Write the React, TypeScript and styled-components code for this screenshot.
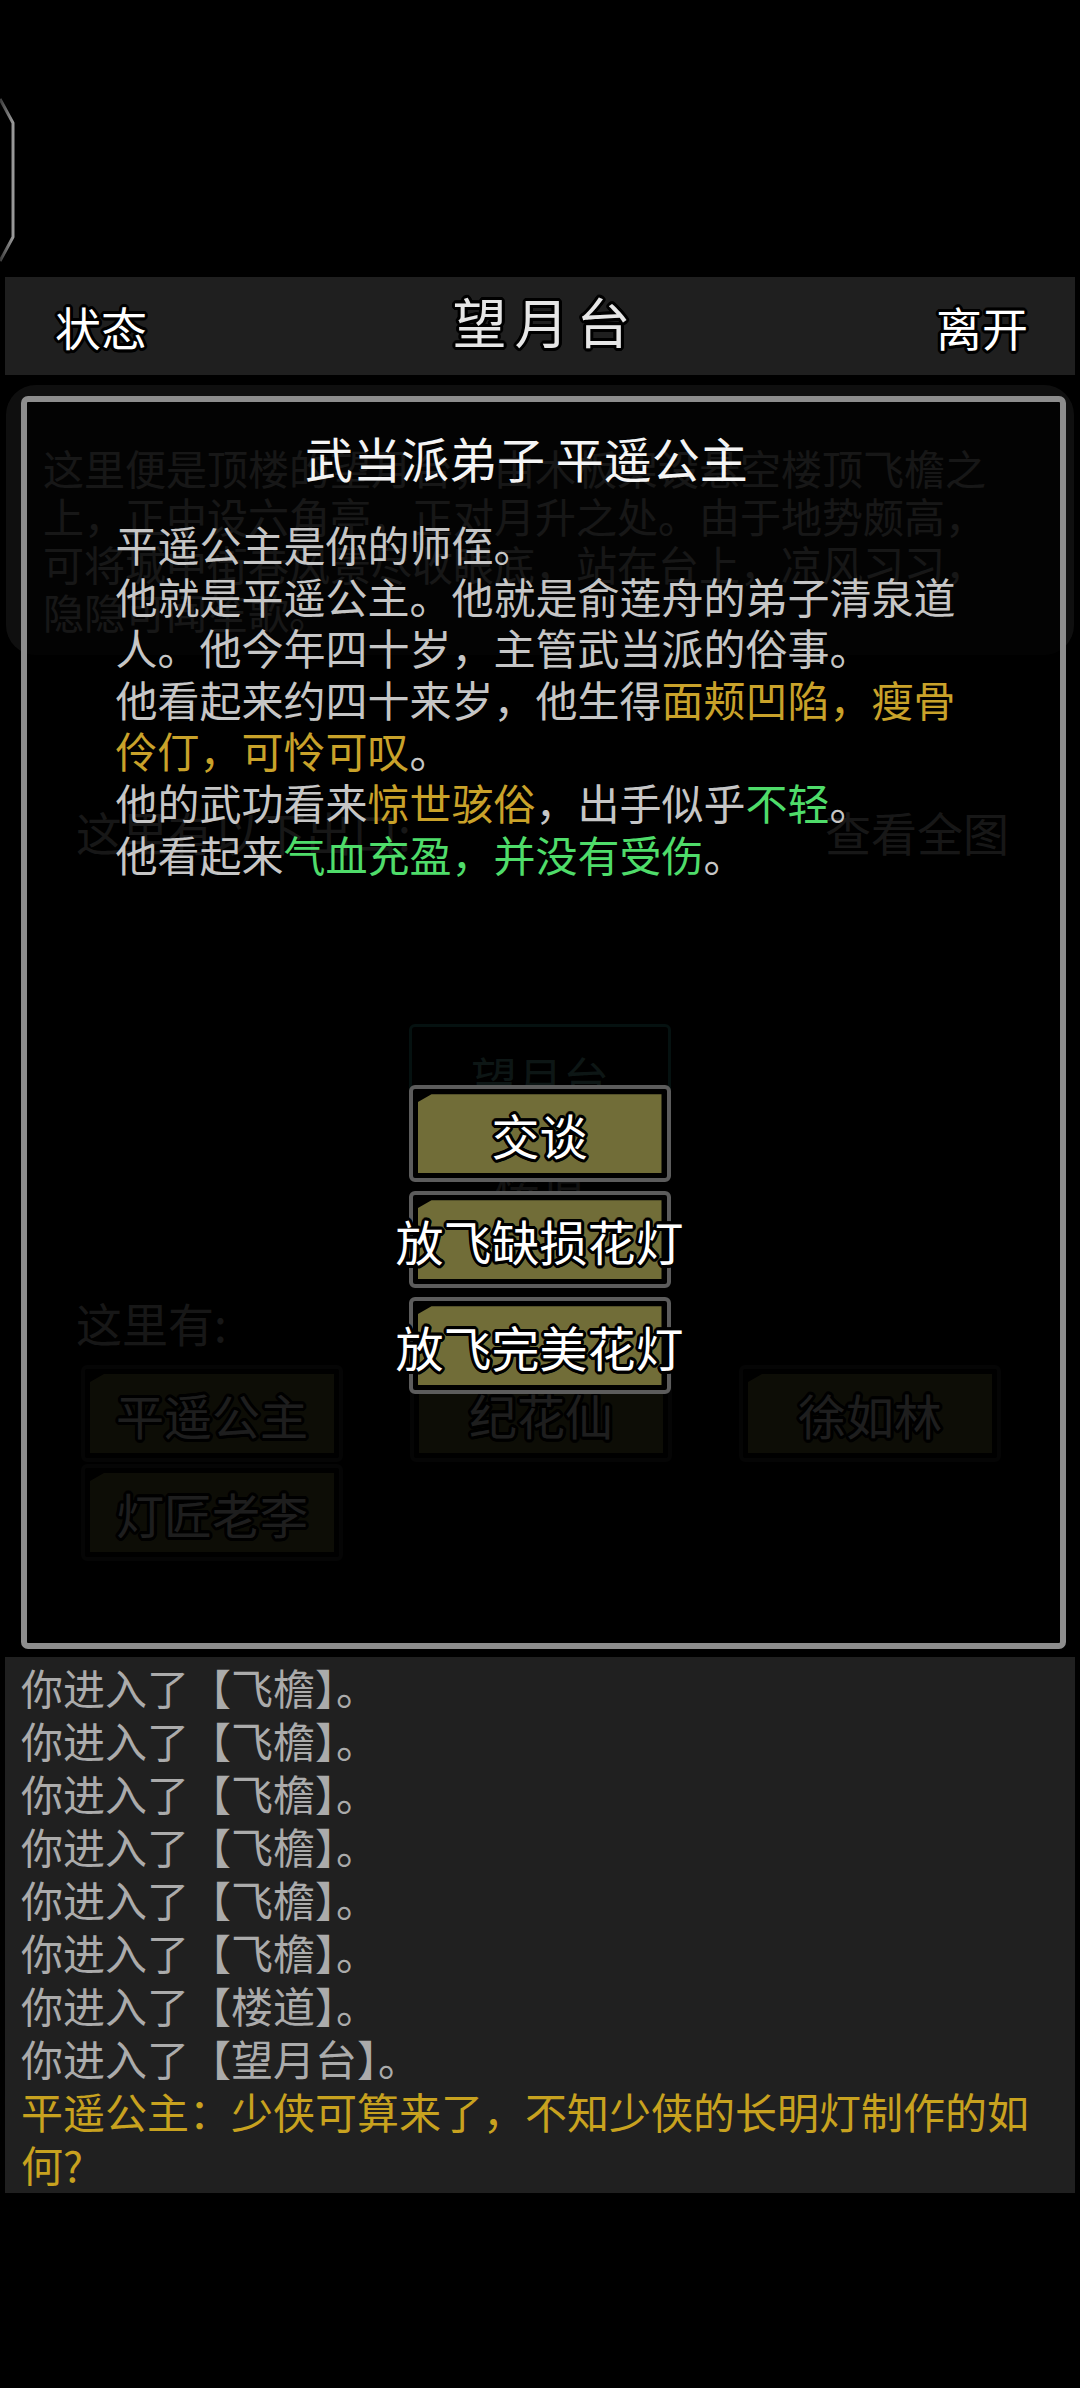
import React from 'react';
import styled, { createGlobalStyle } from 'styled-components';

const outline = (r: number, color = '#000') => {
  const parts: string[] = [];
  for (let i = 0; i < 16; i++) {
    const a = (i / 16) * Math.PI * 2;
    parts.push(`${(Math.cos(a) * r).toFixed(1)}px ${(Math.sin(a) * r).toFixed(1)}px 0 ${color}`);
  }
  return parts.join(', ');
};

const GlobalStyle = createGlobalStyle`
  html, body {
    margin: 0;
    padding: 0;
    background: #000;
  }
  body {
    font-family: "Noto Sans CJK SC", "Noto Sans", sans-serif;
  }
`;

const Page = styled.div`
  width: 1080px;
  height: 2388px;
  display: flex;
  flex-direction: column;
  background: #000;
  overflow: hidden;
`;

const StatusArea = styled.div`
  height: 277px;
  flex: none;
  position: relative;
`;

const SideHandle = styled.svg`
  position: absolute;
  left: 0;
  top: 97px;
`;

const Header = styled.header`
  flex: none;
  height: 98px;
  margin: 0 5px;
  padding: 0 47px 0 50px;
  box-sizing: border-box;
  background: #1f1f1f;
  display: flex;
  align-items: center;
  justify-content: space-between;
`;

const HeaderLink = styled.span`
  font-size: 46px;
  color: #fff;
  text-shadow: ${outline(3)};
`;

const HeaderTitle = styled.span`
  font-size: 54px;
  font-weight: 400;
  letter-spacing: 8px;
  margin-right: -8px;
  margin-top: -12px;
  color: #e6e6e6;
  text-shadow: ${outline(3)};
`;

const Main = styled.main`
  flex: none;
  height: 1282px;
  position: relative;
  overflow: hidden;
`;

/* ---------- scene underneath the dialog ---------- */

const Scene = styled.div`
  display: flex;
  flex-direction: column;
`;

const DescPanel = styled.div`
  margin: 10px 6px 0;
  padding: 58px 30px 20px 37px;
  background: #1f1f1f;
  border-radius: 30px;
`;

const DescText = styled.div`
  width: 962px;
  color: #c4c4c4;
  font-size: 41px;
  line-height: 48px;
`;

const ExitRow = styled.div`
  margin-top: 150px;
  padding: 0 71px 0 76px;
  display: flex;
  justify-content: space-between;
  font-size: 46px;
  line-height: 52px;
  color: #c4c4c4;
`;

const MapArea = styled.div`
  margin-top: 167px;
  display: flex;
  flex-direction: column;
  align-items: center;
`;

const MapRoom = styled.div<{ $current?: boolean }>`
  width: 262px;
  height: 104px;
  box-sizing: border-box;
  border: 3px solid ${p => (p.$current ? '#2c8f86' : 'transparent')};
  border-radius: 6px;
  display: flex;
  align-items: center;
  justify-content: center;
  font-size: 46px;
  color: ${p => (p.$current ? '#6fb8b0' : '#9a9a9a')};
`;

const HereLabel = styled.div`
  margin-top: 64px;
  padding-left: 76px;
  font-size: 46px;
  line-height: 52px;
  color: #c4c4c4;
`;

const NpcGrid = styled.div`
  margin-top: 17px;
  padding: 0 82px 0 81px;
  display: grid;
  grid-template-columns: repeat(3, 259px);
  justify-content: space-between;
  row-gap: 2px;
`;

/* ---------- shared olive button ---------- */

const Choice = styled.div<{ $frame: string }>`
  width: 262px;
  height: 97px;
  box-sizing: border-box;
  border: 4px solid ${p => p.$frame};
  border-radius: 6px;
  padding: 5px;
  background: #000;
  display: grid;
  grid-template-columns: minmax(0, 1fr);
  grid-template-rows: minmax(0, 1fr);
`;

const ChoiceFill = styled.div`
  grid-area: 1 / 1;
  background: #716d38;
  clip-path: polygon(14px 0, 100% 0, 100% 100%, 0 100%, 0 8px);
`;

const ChoiceLabel = styled.div`
  grid-area: 1 / 1;
  position: relative;
  display: flex;
  align-items: center;
  justify-content: center;
  white-space: nowrap;
  font-size: 48px;
  color: #fff;
  text-shadow: ${outline(3)};
`;

const ChoiceButton = ({ label, frame = '#5c5c5c' }: { label: string; frame?: string }) => (
  <Choice $frame={frame}>
    <ChoiceFill />
    <ChoiceLabel>{label}</ChoiceLabel>
  </Choice>
);

/* ---------- dialog ---------- */

const Dim = styled.div`
  position: absolute;
  inset: 0;
  background: rgba(0, 0, 0, 0.5);
`;

const Dialog = styled.section`
  position: absolute;
  top: 21px;
  left: 21px;
  right: 14px;
  bottom: 8px;
  box-sizing: border-box;
  border: 6px solid #8d8d8d;
  border-radius: 7px;
  background: rgba(0, 0, 0, 0.76);
  display: flex;
  flex-direction: column;
  align-items: center;
  padding-top: 24px;
`;

const DialogTitle = styled.h2`
  margin: 0 34px 0 0;
  font-size: 48px;
  line-height: 62px;
  font-weight: 400;
  color: #f4f4f4;
`;

const DialogBody = styled.div`
  width: 856px;
  margin-top: 30px;
  font-size: 42px;
  line-height: 51.6px;
  color: #c6c6c6;
`;

const Para = styled.div``;

const Tone = styled.span<{ $tone: 'gold' | 'green' }>`
  color: ${p => (p.$tone === 'gold' ? '#c9a22a' : '#4fdc6a')};
`;

const Actions = styled.div`
  margin: 206px 8px 0 0;
  display: flex;
  flex-direction: column;
  gap: 9px;
`;

/* ---------- message log ---------- */

const Log = styled.div`
  flex: none;
  height: 536px;
  margin: 0 5px;
  padding: 3px 16px 0 16px;
  box-sizing: border-box;
  background: #202020;
  font-size: 42px;
  line-height: 53px;
  color: #ababab;
`;

const LogLine = styled.div<{ $speech?: boolean }>`
  color: ${p => (p.$speech ? '#c8a21f' : '#ababab')};
`;

const log = [
  '你进入了【飞檐】。',
  '你进入了【飞檐】。',
  '你进入了【飞檐】。',
  '你进入了【飞檐】。',
  '你进入了【飞檐】。',
  '你进入了【飞檐】。',
  '你进入了【楼道】。',
  '你进入了【望月台】。',
];

export default function App() {
  return (
    <Page>
      <GlobalStyle />
      <StatusArea>
        <SideHandle width="18" height="168" viewBox="0 0 18 168">
          <defs>
            <linearGradient id="hg" x1="0" y1="0" x2="1" y2="0">
              <stop offset="0" stopColor="#3a3a3a" />
              <stop offset="1" stopColor="#9a9a9a" />
            </linearGradient>
          </defs>
          <polyline
            points="0,2 13,26 13,140 0,164"
            fill="none"
            stroke="url(#hg)"
            strokeWidth="3"
            strokeLinejoin="round"
          />
        </SideHandle>
      </StatusArea>

      <Header>
        <HeaderLink>状态</HeaderLink>
        <HeaderTitle>望月台</HeaderTitle>
        <HeaderLink>离开</HeaderLink>
      </Header>

      <Main>
        <Scene>
          <DescPanel>
            <DescText>
              这里便是顶楼的望月台，由木板架设悬空楼顶飞檐之上，正中设六角亭，正对月升之处。由于地势颇高，可将城中街巷风景尽收眼底，站在台上，凉风习习，隐隐可闻笙歌。
            </DescText>
          </DescPanel>
          <ExitRow>
            <span>这里有以下出口:</span>
            <span>查看全图</span>
          </ExitRow>
          <MapArea>
            <MapRoom $current>望月台</MapRoom>
            <MapRoom>楼道</MapRoom>
          </MapArea>
          <HereLabel>这里有:</HereLabel>
          <NpcGrid>
            <ChoiceButton label="平遥公主" frame="#2a2a2a" />
            <ChoiceButton label="纪花仙" frame="#2a2a2a" />
            <ChoiceButton label="徐如林" frame="#2a2a2a" />
            <ChoiceButton label="灯匠老李" frame="#2a2a2a" />
          </NpcGrid>
        </Scene>

        <Dim />

        <Dialog>
          <DialogTitle>武当派弟子 平遥公主</DialogTitle>
          <DialogBody>
            <Para>平遥公主是你的师侄。</Para>
            <Para>他就是平遥公主。他就是俞莲舟的弟子清泉道人。他今年四十岁，主管武当派的俗事。</Para>
            <Para>
              他看起来约四十来岁，他生得<Tone $tone="gold">面颊凹陷，瘦骨伶仃，可怜可叹</Tone>。
            </Para>
            <Para>
              他的武功看来<Tone $tone="gold">惊世骇俗</Tone>，出手似乎<Tone $tone="green">不轻</Tone>。
            </Para>
            <Para>
              他看起来<Tone $tone="green">气血充盈，并没有受伤</Tone>。
            </Para>
          </DialogBody>
          <Actions>
            <ChoiceButton label="交谈" />
            <ChoiceButton label="放飞缺损花灯" />
            <ChoiceButton label="放飞完美花灯" />
          </Actions>
        </Dialog>
      </Main>

      <Log>
        {log.map((l, i) => (
          <LogLine key={i}>{l}</LogLine>
        ))}
        <LogLine $speech>平遥公主：少侠可算来了，不知少侠的长明灯制作的如何?</LogLine>
      </Log>
    </Page>
  );
}
